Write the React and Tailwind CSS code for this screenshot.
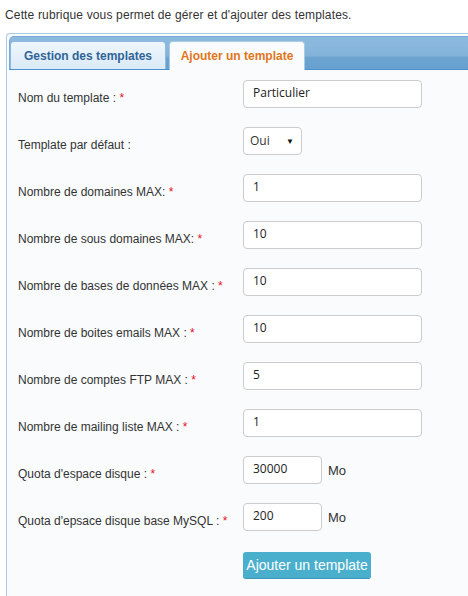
import React from 'react'

const rows = [
  { label: 'Nom du template :', req: true, value: 'Particulier' },
  { label: 'Template par défaut :', select: 'Oui' },
  { label: 'Nombre de domaines MAX:', req: true, value: '1' },
  { label: 'Nombre de sous domaines MAX:', req: true, value: '10' },
  { label: 'Nombre de bases de données MAX :', req: true, value: '10' },
  { label: 'Nombre de boites emails MAX :', req: true, value: '10' },
  { label: 'Nombre de comptes FTP MAX :', req: true, value: '5' },
  { label: 'Nombre de mailing liste MAX :', req: true, value: '1' },
  { label: "Quota d'espace disque :", req: true, value: '30000', unit: 'Mo' },
  { label: "Quota d'epsace disque base MySQL :", req: true, value: '200', unit: 'Mo' },
]

const App = () => {
  return (
    <div className="min-h-[596px] bg-white font-['Liberation_Sans',Arial,sans-serif] text-[12px] text-[#333] overflow-hidden">
      <p className="pl-[5px] pt-[8px] leading-[14px] tracking-[0.15px]">Cette rubrique vous permet de gérer et d'ajouter des templates.</p>

      <div className="ml-[6px] mt-[11px] min-h-[563px] w-[470px] border-l border-t border-[#a9cbe6] rounded-tl-[4px] bg-[#f9fbfc] pt-[2px] pl-[2px]">
        {/* tabs */}
        <div className="flex items-end gap-[3px] h-[34px] rounded-tl-[5px] border border-[#74a9d8] border-b-[#4a8fd0] bg-[linear-gradient(to_bottom,#8dbadf_0%,#84b3da_60%,#6ca3d0_62%,#68a0cf_100%)]">
          <div className="h-[28px] w-[156px] flex items-center justify-center rounded-t-[4px] border border-b-0 border-[#8fb9de] bg-[linear-gradient(to_bottom,#eef6fd,#dbeaf8)] text-[12px] font-bold text-[#2f6596]">
            Gestion des templates
          </div>
          <div className="h-[29px] w-[136px] mb-[-1px] flex items-center justify-center rounded-t-[4px] border border-b-0 border-[#a9cbe6] bg-[#f9fbfc] text-[12px] font-bold text-[#e1761a]">
            Ajouter un template
          </div>
        </div>

        {/* form */}
        <div className="pl-[9px] pt-[10px]">
          {rows.map((r, i) => (
            <div key={i} className="flex items-start h-[47px]">
              <div className="w-[225px] pt-[11px] leading-[14px]">
                {r.label}
                {r.req && <span className="text-[#e8101a]"> *</span>}
              </div>
              {r.select ? (
                <div className="h-[28px] w-[59px] flex items-center justify-between pl-[6px] pr-[7px] border border-[#ccc] rounded-[4px] bg-white font-['Open_Sans',sans-serif] text-[12px] text-[#333]">
                  <span>{r.select}</span>
                  <span className="text-[8px] text-[#111]">▼</span>
                </div>
              ) : (
                <div className="flex items-start">
                  <input
                    readOnly
                    value={r.value}
                    className={`${r.unit ? 'w-[79px]' : 'w-[179px]'} h-[28px] pl-[9px] pb-[3px] border border-[#ccc] rounded-[4px] bg-white font-['Open_Sans',sans-serif] text-[12px] text-[#222] outline-none`}
                  />
                  {r.unit && <span className="ml-[6px] pt-[8px] leading-[14px] text-[13px]">{r.unit}</span>}
                </div>
              )}
            </div>
          ))}
          <div className="flex pt-[2px]">
            <div className="w-[225px]" />
            <button className="h-[27px] w-[128px] rounded-[3px] bg-[#4aafcd] border-b border-[#3c98b6] text-white text-[14px] leading-none">
              Ajouter un template
            </button>
          </div>
        </div>
      </div>
    </div>
  )
}

export default App
